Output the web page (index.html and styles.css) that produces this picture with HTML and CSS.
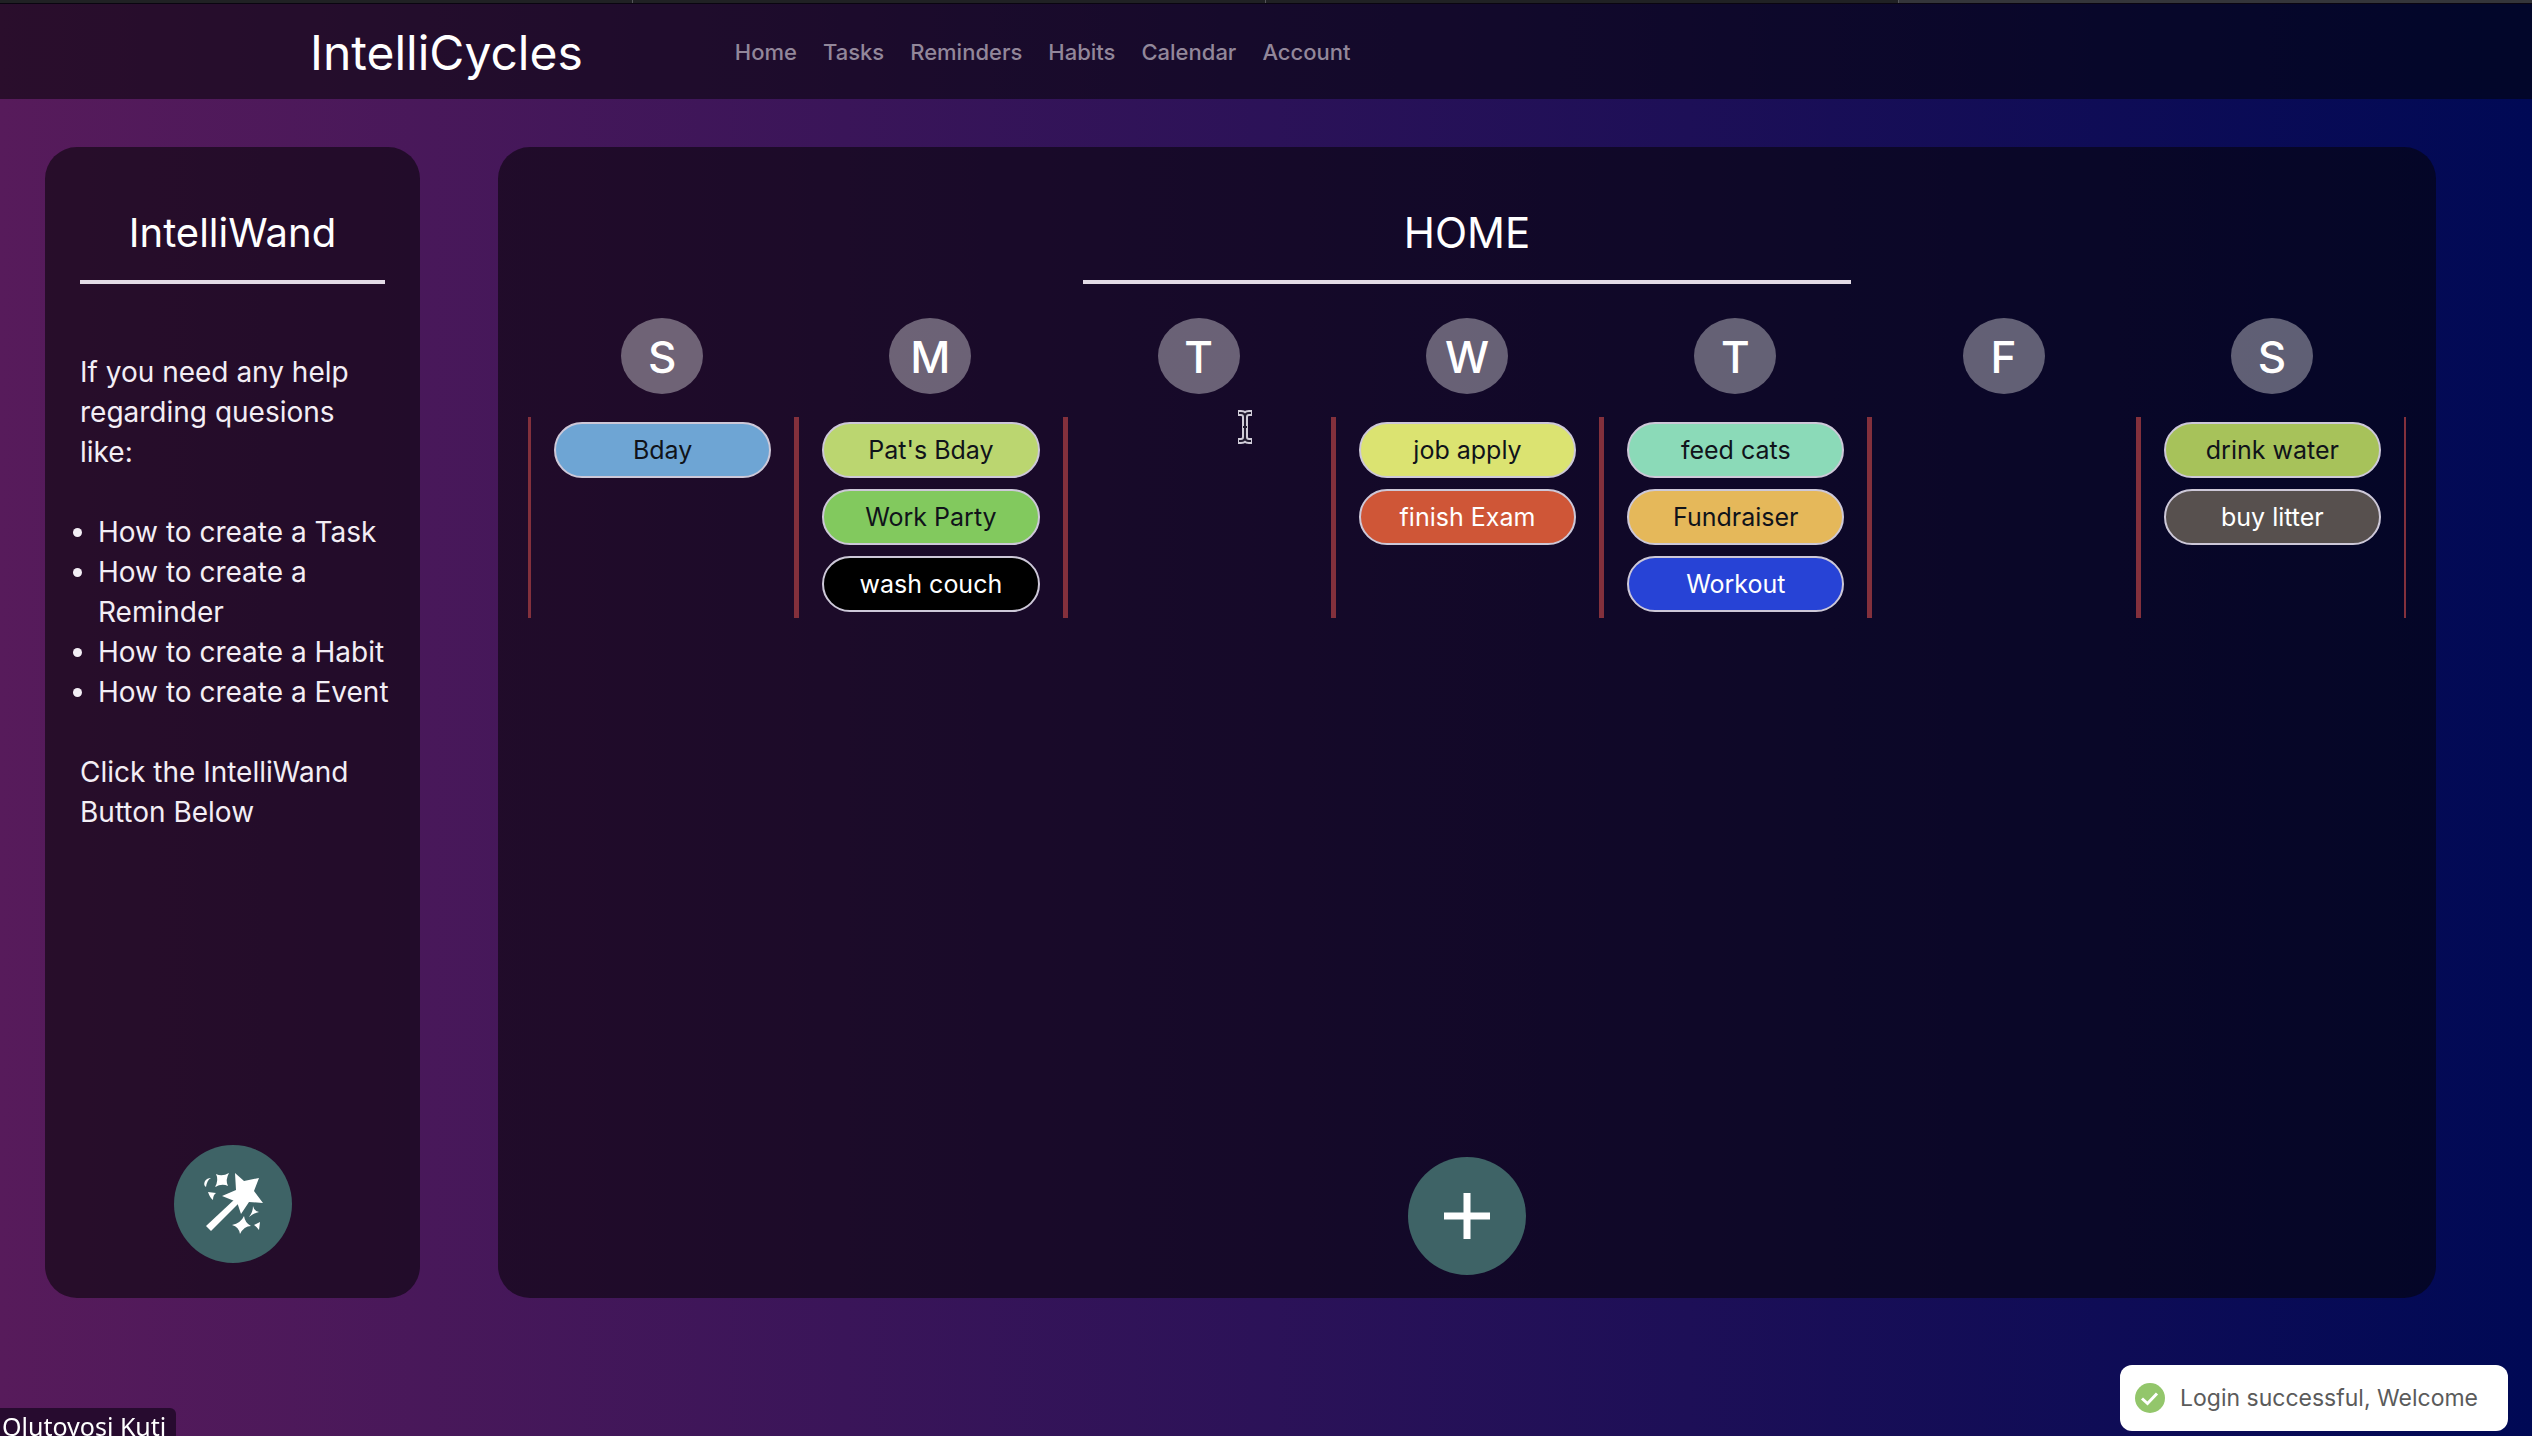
FILE: index.html
```html
<!DOCTYPE html>
<html lang="en">
<head>
<meta charset="utf-8">
<title>IntelliCycles</title>
<link rel="stylesheet" href="styles.css">
</head>
<body>
<div class="tab-strip"><span></span><span></span><span></span><span class="active"></span></div>
<header class="navbar">
  <a class="brand" href="#">IntelliCycles</a>
  <nav class="nav">
    <a href="#">Home</a>
    <a href="#">Tasks</a>
    <a href="#">Reminders</a>
    <a href="#">Habits</a>
    <a href="#">Calendar</a>
    <a href="#">Account</a>
  </nav>
</header>
<div class="layout">
  <aside class="card sidebar">
    <h2 class="title">IntelliWand</h2>
    <hr class="rule">
    <div class="help">
      <p>If you need any help regarding quesions like:</p>
      <ul>
        <li>How to create a Task</li>
        <li>How to create a Reminder</li>
        <li>How to create a Habit</li>
        <li>How to create a Event</li>
      </ul>
      <p>Click the IntelliWand Button Below</p>
    </div>
    <button class="round" type="button" aria-label="IntelliWand">
      <svg width="60" height="64" viewBox="0 0 60 64" fill="#fff">
        <path d="M32 1 41 9 56 6 51 19 60 31 46 30 38 42 34 30 19 24 33 18Z"/>
        <path d="M33 26 37 30 8 59 3 54Z"/>
        <path d="M13 2Q19 5 26 1 22 8 25 14 19 11 12 15 16 8 13 2Z"/>
        <path d="M41 44Q42 51 48 54 41 54 37 62 36 55 29 53 38 51 41 44Z"/>
        <path d="M8 6Q4 8 3 15 0 13 2 9 4 6 8 6Z"/>
        <path d="M5 20 13 21Q10 23 10 28 7 26 5 20Z"/>
        <path d="M50 34Q51 39 56 40 51 41 46 45 50 40 50 34Z"/>
        <path d="M51 53 57 50 56 58Q54 55 51 53Z"/>
      </svg>
    </button>
  </aside>
  <main class="card main">
    <h1 class="title">HOME</h1>
    <hr class="rule short">
    <div class="week">
      <section class="day"><h2>S</h2><div class="slots"><button type="button" class="chip sky">Bday</button></div></section>
      <section class="day"><h2>M</h2><div class="slots"><button type="button" class="chip lime">Pat's Bday</button><button type="button" class="chip green">Work Party</button><button type="button" class="chip black">wash couch</button></div></section>
      <section class="day"><h2>T</h2><div class="slots"></div></section>
      <section class="day"><h2>W</h2><div class="slots"><button type="button" class="chip yellow">job apply</button><button type="button" class="chip red">finish Exam</button></div></section>
      <section class="day"><h2>T</h2><div class="slots"><button type="button" class="chip mint">feed cats</button><button type="button" class="chip orange">Fundraiser</button><button type="button" class="chip blue">Workout</button></div></section>
      <section class="day"><h2>F</h2><div class="slots"></div></section>
      <section class="day"><h2>S</h2><div class="slots"><button type="button" class="chip olive">drink water</button><button type="button" class="chip gray">buy litter</button></div></section>
    </div>
    <button class="round" type="button" aria-label="Add">
      <svg width="46" height="46" viewBox="0 0 46 46" stroke="#fff" stroke-width="7"><path d="M23 0V46M0 23H46"/></svg>
    </button>
  </main>
</div>
<svg class="cursor" width="16" height="34" viewBox="0 0 16 34" fill="none"><path d="M1 3H4Q8 3 8 7 8 3 12 3H15M8 6V28M1 31H4Q8 31 8 27 8 31 12 31H15M5 17H11" stroke="#d0ccd8" stroke-width="6"/><path d="M2 3H4Q8 3 8 7 8 3 12 3H14M8 6V28M2 31H4Q8 31 8 27 8 31 12 31H14M6 17H10" stroke="#221b30" stroke-width="2"/></svg>
<div class="toast" role="status">
  <svg width="30" height="30" viewBox="0 0 30 30"><circle cx="15" cy="15" r="15" fill="#93c66b"/><path d="M7 15.500 12.500 20.500 22 10.500" fill="none" stroke="#fff" stroke-width="3"/></svg>
  <span>Login successful, Welcome</span>
</div>
<div class="name-tag">Olutoyosi Kuti</div>
</body>
</html>
```
FILE: styles.css
```css
* { box-sizing: border-box; }

body {
  margin: 0;
  min-height: 100vh;
  display: flex;
  flex-direction: column;
  background: linear-gradient(90deg, #571b5b, #000955);
  color: #f3eef5;
  font-family: Inter, "Liberation Sans", sans-serif;
}

h1, h2, p, ul { margin: 0; font-weight: 400; }
a { text-decoration: none; }
button { font: inherit; padding: 0; cursor: pointer; }

.tab-strip {
  display: grid;
  grid-template-columns: repeat(4, 1fr);
  height: 4px;
  background: #202124;
  border-bottom: 1px solid #0a0510;
}
.tab-strip span { border-right: 1px solid #55565a; }
.tab-strip .active { background: #34353a; border: 0; }

.navbar {
  display: flex;
  align-items: center;
  gap: 152px;
  height: 95px;
  padding: 0 12%;
  padding-left: 310px;
  background: rgba(4, 3, 6, .54);
}
.brand { color: #fff; font-size: 48px; line-height: 60px; padding-top: 2px; }
.nav { display: flex; gap: 26px; }
.nav a { color: #92879a; font-size: 22px; font-weight: 500; line-height: 32px; }

.layout {
  flex: 1;
  display: grid;
  grid-template-columns: 375fr 1938fr;
  gap: 78px;
  padding: 48px 96px 138px 45px;
}
.card {
  display: flex;
  flex-direction: column;
  align-items: center;
  border-radius: 32px;
  background: rgba(6, 4, 6, .57);
}
.sidebar { padding: 56px 35px 35px; }
.main { padding: 56px 10px 23px; }

.title { color: #fff; font-size: 42px; line-height: 60px; }
.sidebar .title { font-size: 40px; }
.rule { width: 100%; height: 4px; margin: 17px 0 0; border: 0; background: #e3dbe6; }
.rule.short { width: 40%; }

.help { width: 100%; padding-top: 68px; font-size: 28px; line-height: 40px; }
.help ul { margin: 40px -12px 40px 0; padding-left: 18px; }

.round {
  display: grid;
  place-items: center;
  width: 118px;
  height: 118px;
  margin-top: auto;
  border: 0;
  border-radius: 50%;
  background: #3e6366;
}

.week {
  width: 100%;
  display: grid;
  grid-template-columns: repeat(7, 1fr);
  padding: 34px 20px 0;
}
.day { display: flex; flex-direction: column; align-items: center; gap: 23px; }
.day h2 {
  width: 82px;
  height: 76px;
  border-radius: 50%;
  background: rgba(255, 255, 255, .36);
  color: #fff;
  font-size: 44px;
  font-weight: 500;
  line-height: 78px;
  text-align: center;
}
.slots {
  flex: 1;
  width: 100%;
  display: flex;
  flex-direction: column;
  gap: 11px;
  padding: 5px 23px 6px;
  border: solid #83303c;
  border-width: 0 2px 0 3px;
}
.chip {
  height: 56px;
  border: 2px solid #cdc8d8;
  border-radius: 28px;
  font-size: 25px;
  line-height: 32px;
  color: #10131a;
}
.sky { background: #6ea5d4; }
.lime { background: #bbd670; }
.green { background: #82c95e; }
.black { background: #000; color: #fff; }
.yellow { background: #dbe371; }
.red { background: #cf5637; color: #fff; }
.mint { background: #8bdab8; }
.orange { background: #e5b85a; }
.blue { background: #2743d6; color: #fff; }
.olive { background: #a7c25a; }
.gray { background: #57504e; color: #fff; }

.cursor { position: absolute; left: 1237px; top: 410px; }

.toast {
  position: fixed;
  right: 24px;
  bottom: 5px;
  display: flex;
  align-items: center;
  gap: 15px;
  height: 66px;
  padding: 0 30px 0 15px;
  border-radius: 12px;
  background: #fff;
  color: #5b5b5b;
  font-size: 23px;
  line-height: 32px;
}
.name-tag {
  position: fixed;
  left: 0;
  bottom: 0;
  height: 28px;
  overflow: hidden;
  padding: 0 10px 0 2px;
  border-radius: 0 6px 0 0;
  background: #270b2f;
  color: #fff;
  font-family: "Noto Sans", sans-serif;
  font-size: 25px;
  line-height: 36px;
}
```
